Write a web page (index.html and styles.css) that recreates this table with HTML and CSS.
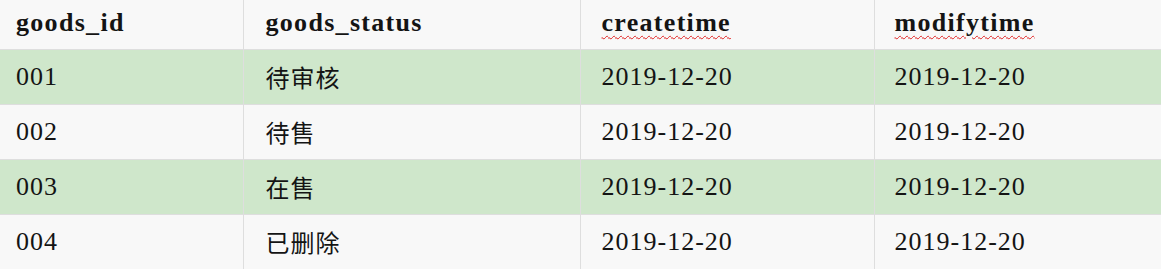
FILE: index.html
```html
<!DOCTYPE html>
<html lang="zh">
<head>
<meta charset="utf-8">
<link rel="stylesheet" href="styles.css">
</head>
<body>
<table class="grid">
  <thead>
    <tr class="head">
      <th class="c1">goods_id</th>
      <th class="c2">goods_status</th>
      <th class="c3"><span class="spell">createtime</span></th>
      <th class="c4"><span class="spell">modifytime</span></th>
    </tr>
  </thead>
  <tbody>
    <tr class="green">
      <td class="c1">001</td><td class="c2 cjk">待审核</td><td class="c3">2019-12-20</td><td class="c4">2019-12-20</td>
    </tr>
    <tr>
      <td class="c1">002</td><td class="c2 cjk">待售</td><td class="c3">2019-12-20</td><td class="c4">2019-12-20</td>
    </tr>
    <tr class="green">
      <td class="c1">003</td><td class="c2 cjk">在售</td><td class="c3">2019-12-20</td><td class="c4">2019-12-20</td>
    </tr>
    <tr>
      <td class="c1">004</td><td class="c2 cjk">已删除</td><td class="c3">2019-12-20</td><td class="c4">2019-12-20</td>
    </tr>
  </tbody>
</table>
</body>
</html>
```
FILE: styles.css
```css
html, body {
  margin: 0;
  padding: 0;
  background: #f8f8f8;
}
.grid {
  border-collapse: collapse;
  table-layout: fixed;
  width: 1161px;
  font-family: "Liberation Serif", "Noto Sans CJK SC", serif;
  font-size: 26px;
  color: #141414;
}
.grid th, .grid td {
  padding: 0;
  text-align: left;
  vertical-align: middle;
  border-left: 1px solid #dedede;
  border-bottom: 1px solid #dedede;
  white-space: nowrap;
}
.grid th:first-child, .grid td:first-child {
  border-left: none;
}
.head th {
  height: 49px;
  font-weight: bold;
  letter-spacing: 1.3px;
  padding-bottom: 2px;
  box-sizing: border-box;
}
.grid td {
  height: 54px;
  letter-spacing: 1px;
}
.grid tbody tr:last-child td {
  border-bottom: none;
}
.green td {
  background: #cfe7cb;
}
.c1 { width: 243px; padding-left: 16px !important; }
.c2 { width: 337px; padding-left: 22px !important; }
.c3 { width: 294px; padding-left: 21px !important; }
.c4 { padding-left: 20px !important; }
.grid td.cjk {
  font-family: "Noto Sans CJK SC", sans-serif;
  font-size: 24px;
  letter-spacing: 1px;
}
.spell {
  text-decoration: underline wavy #e02020;
  text-decoration-thickness: 1px;
  text-underline-offset: 4px;
}
```
